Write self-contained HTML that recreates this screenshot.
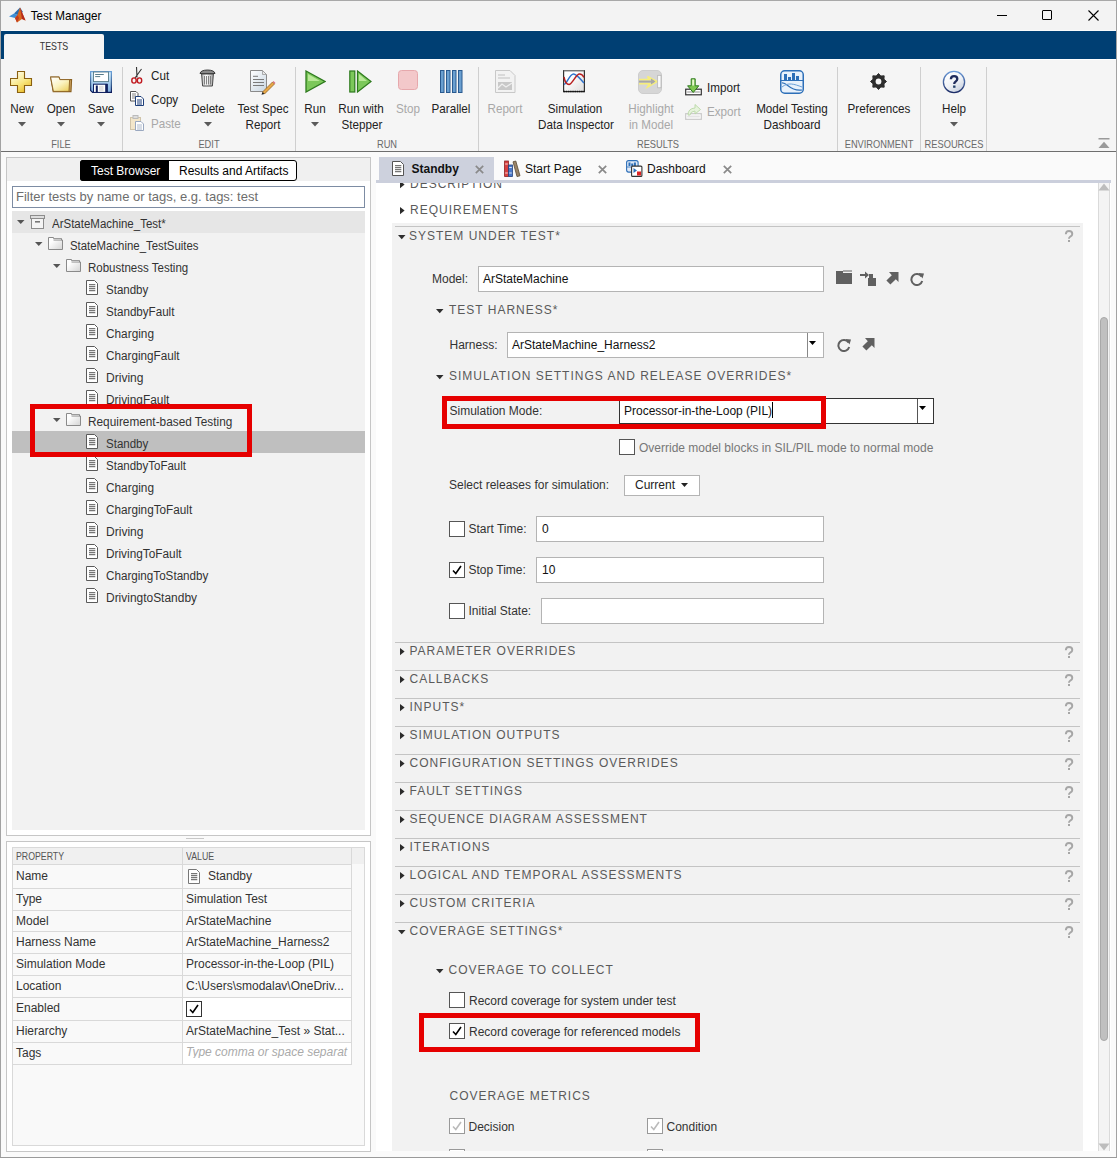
<!DOCTYPE html><html><head><meta charset="utf-8"><style>
html,body{margin:0;padding:0}
body{width:1117px;height:1158px;position:relative;overflow:hidden;background:#fafafa;font-family:"Liberation Sans",sans-serif}
body div{position:absolute;box-sizing:border-box}
.t{white-space:nowrap;line-height:1}
</style></head><body>
<div style="left:0px;top:0px;width:1117px;height:31px;background:#f3f3f3"></div>
<svg style="position:absolute;left:9px;top:7px" width="17" height="16" viewBox="0 0 17 16"><path d="M0 9.5 L5 6.5 L8.5 8 L6 11 Z" fill="#3d8fd6"/><path d="M5 6.5 L11 0.5 L14 5 L8.5 8 Z" fill="#2a6db0"/><path d="M8.5 8 L11 0.5 L16.5 13.5 L13 12 L8 15.5 L6 11 Z" fill="#d9661e"/><path d="M11 0.5 L16.5 13.5 L13 12 Z" fill="#b52a1c"/><path d="M6 11 L8.5 8 L10 11 L8 15.5 Z" fill="#c13a1e"/></svg>
<div class="t" style="left:-84px;width:300px;text-align:center;top:9.5px;font-size:12.4px;color:#000;transform:scaleX(0.94);">Test Manager</div>
<div style="left:997px;top:15px;width:10px;height:1px;background:#000"></div>
<div style="left:1042px;top:10px;width:10px;height:10px;border:1px solid #000;border-radius:1px"></div>
<svg style="position:absolute;left:1088px;top:10px" width="11" height="11" viewBox="0 0 11 11"><path d="M0.5 0.5 L10.5 10.5 M10.5 0.5 L0.5 10.5" stroke="#000" stroke-width="1.1"/></svg>
<div style="left:0px;top:31px;width:1117px;height:28px;background:#003f73"></div>
<div style="left:4px;top:34px;width:100px;height:26px;background:#f5f5f5;border-radius:2px 2px 0 0"></div>
<div class="t" style="left:-96px;width:300px;text-align:center;top:41px;font-size:10.8px;color:#333;transform:scaleX(0.82);">TESTS</div>
<div style="left:0px;top:59px;width:1117px;height:92px;background:#f5f5f5"></div>
<div style="left:104px;top:59px;width:1013px;height:1px;background:#ffffff"></div>
<div style="left:0px;top:30px;width:1117px;height:1px;background:#fbfbfb"></div>
<div style="left:0px;top:151px;width:1117px;height:1px;background:#6e6e6e"></div>
<div style="left:122px;top:67px;width:1px;height:84px;background:#cfcfcf"></div>
<div style="left:295px;top:67px;width:1px;height:84px;background:#cfcfcf"></div>
<div style="left:478px;top:67px;width:1px;height:84px;background:#cfcfcf"></div>
<div style="left:837px;top:67px;width:1px;height:84px;background:#cfcfcf"></div>
<div style="left:920px;top:67px;width:1px;height:84px;background:#cfcfcf"></div>
<div style="left:986px;top:67px;width:1px;height:84px;background:#cfcfcf"></div>
<div class="t" style="left:-89px;width:300px;text-align:center;top:139px;font-size:10.8px;color:#6a6a6a;transform:scaleX(0.86);">FILE</div>
<div class="t" style="left:58.5px;width:300px;text-align:center;top:139px;font-size:10.8px;color:#6a6a6a;transform:scaleX(0.86);">EDIT</div>
<div class="t" style="left:236.5px;width:300px;text-align:center;top:139px;font-size:10.8px;color:#6a6a6a;transform:scaleX(0.86);">RUN</div>
<div class="t" style="left:508px;width:300px;text-align:center;top:139px;font-size:10.8px;color:#6a6a6a;transform:scaleX(0.86);">RESULTS</div>
<div class="t" style="left:729px;width:300px;text-align:center;top:139px;font-size:10.8px;color:#6a6a6a;transform:scaleX(0.86);">ENVIRONMENT</div>
<div class="t" style="left:803.5px;width:300px;text-align:center;top:139px;font-size:10.8px;color:#6a6a6a;transform:scaleX(0.86);">RESOURCES</div>
<svg style="position:absolute;left:10px;top:71px" width="23" height="23" viewBox="0 0 23 23"><defs><linearGradient id="pl" x1="0.2" y1="0" x2="0.8" y2="1"><stop offset="0" stop-color="#fffef0"/><stop offset=".55" stop-color="#f8e680"/><stop offset="1" stop-color="#e8b820"/></linearGradient></defs><path d="M7.5 0.5 H14.5 V7.5 H21.5 V14.5 H14.5 V21.5 H7.5 V14.5 H0.5 V7.5 H7.5 Z" fill="url(#pl)" stroke="#8a6010" stroke-width="1.1"/></svg>
<div class="t" style="left:-128.5px;width:300px;text-align:center;top:102.5px;font-size:12.4px;color:#222;transform:scaleX(0.94);">New</div>
<svg style="position:absolute;left:17.5px;top:122px" width="8" height="5" viewBox="0 0 8 5"><path d="M0 0 L8 0 L4 4.5 Z" fill="#5a5a5a"/></svg>
<svg style="position:absolute;left:50px;top:76px" width="23" height="17" viewBox="0 0 23 17"><defs><linearGradient id="of" x1="0.1" y1="0" x2="0.9" y2="1"><stop offset="0" stop-color="#ffffff"/><stop offset=".5" stop-color="#fbf3c0"/><stop offset="1" stop-color="#ecd060"/></linearGradient></defs><path d="M0.6 1.1 H9 L10 3.6 H21.6 L21 15.6 H3.2 Z" fill="#c8a060" stroke="#8a6020" stroke-width="1.1"/><path d="M0.6 1.1 H9 L9.8 3.6 H19.6 L19 15.4 H3.4 Z" fill="url(#of)" stroke="#8a6020" stroke-width=".9"/></svg>
<div class="t" style="left:-89px;width:300px;text-align:center;top:102.5px;font-size:12.4px;color:#222;transform:scaleX(0.94);">Open</div>
<svg style="position:absolute;left:57px;top:122px" width="8" height="5" viewBox="0 0 8 5"><path d="M0 0 L8 0 L4 4.5 Z" fill="#5a5a5a"/></svg>
<svg style="position:absolute;left:90px;top:71px" width="23" height="23" viewBox="0 0 23 23"><defs><linearGradient id="fl" x1="0" y1="0" x2="0" y2="1"><stop offset="0" stop-color="#d8f0fc"/><stop offset="1" stop-color="#7eaee0"/></linearGradient><linearGradient id="fs" x1="0" y1="0" x2="0" y2="1"><stop offset="0" stop-color="#6aa0d8"/><stop offset=".6" stop-color="#3a6090"/><stop offset="1" stop-color="#0c1858"/></linearGradient></defs><path d="M0.6 0.6 H21.4 V21.4 H2.6 L0.6 19.4 Z" fill="url(#fl)" stroke="url(#fs)" stroke-width="1.2"/><rect x="3.5" y="1" width="15" height="9.6" fill="#fff" stroke="#557a88" stroke-width=".9"/><path d="M5.2 3.5 H13.8 M5.2 5.6 H10.2" stroke="#587c8a" stroke-width="1"/><rect x="3.5" y="13.2" width="13.5" height="8.2" fill="#fff" stroke="#0e1e5e" stroke-width="1"/><rect x="5.8" y="14.5" width="2" height="7" fill="#0e1e5e"/><rect x="9" y="14.8" width="4.5" height="5.5" fill="#e2e2e2"/><rect x="15.2" y="13" width="2.6" height="8.6" fill="#10205e"/></svg>
<div class="t" style="left:-49.5px;width:300px;text-align:center;top:102.5px;font-size:12.4px;color:#222;transform:scaleX(0.94);">Save</div>
<svg style="position:absolute;left:96.5px;top:122px" width="8" height="5" viewBox="0 0 8 5"><path d="M0 0 L8 0 L4 4.5 Z" fill="#5a5a5a"/></svg>
<svg style="position:absolute;left:130px;top:66px" width="13" height="18" viewBox="0 0 13 18"><path d="M6.5 1 L7 11.5 M11.5 3 L5 12" stroke="#333" stroke-width="1.1"/><ellipse cx="4" cy="14.5" rx="2.2" ry="2.6" fill="none" stroke="#c0181e" stroke-width="1.4"/><ellipse cx="9.5" cy="14.5" rx="2.2" ry="2.6" fill="none" stroke="#c0181e" stroke-width="1.4"/></svg>
<div class="t" style="left:151px;top:69.5px;font-size:12.4px;color:#222;transform:scaleX(0.94);transform-origin:0 0">Cut</div>
<svg style="position:absolute;left:130px;top:91px" width="14" height="15" viewBox="0 0 14 15"><path d="M0.5 0.5 H6 L8 2.5 V10 H0.5 Z" fill="#fff" stroke="#555"/><path d="M2 3 H6 M2 5 H6 M2 7 H6" stroke="#666" stroke-width=".8"/><path d="M5.5 5.5 H11 L13.5 8 V14.5 H5.5 Z" fill="#fff" stroke="#1e3f7a"/><path d="M7 9 H12 M7 11 H12 M7 13 H12" stroke="#1e3f7a" stroke-width="1"/></svg>
<div class="t" style="left:151px;top:93.5px;font-size:12.4px;color:#222;transform:scaleX(0.94);transform-origin:0 0">Copy</div>
<svg style="position:absolute;left:130px;top:115px" width="14" height="16" viewBox="0 0 14 16"><rect x="0.5" y="2.5" width="10" height="12" fill="#f3e3c0" stroke="#c8b898" opacity=".8"/><rect x="3" y="0.5" width="5" height="3" fill="#ddd" stroke="#bbb"/><path d="M5.5 6.5 H11 L13.5 9 V15.5 H5.5 Z" fill="#fff" stroke="#9aa8c0"/><path d="M7 10 H12 M7 12 H12 M7 14 H12" stroke="#9aa8c0" stroke-width=".8"/></svg>
<div class="t" style="left:151px;top:117.5px;font-size:12.4px;color:#a8a8a8;transform:scaleX(0.94);transform-origin:0 0">Paste</div>
<svg style="position:absolute;left:199px;top:69px" width="18" height="19" viewBox="0 0 18 19"><defs><linearGradient id="tb" x1="0" y1="0" x2="1" y2="0"><stop offset="0" stop-color="#b0b0b0"/><stop offset=".4" stop-color="#ffffff"/><stop offset="1" stop-color="#a0a0a0"/></linearGradient></defs><path d="M1 4.5 Q1.5 1.2 8.5 1 Q15.5 1.2 16 4.5 Z" fill="#8a8a8a" stroke="#3a3a3a" stroke-width="1"/><path d="M2.6 5 L3.6 17 H13.4 L14.4 5 Z" fill="url(#tb)" stroke="#4a4a4a" stroke-width="1"/><path d="M5.5 7 V15.5 M7.5 7 V15.5 M9.5 7 V15.5 M11.5 7 V15.5" stroke="#777" stroke-width=".9"/></svg>
<div class="t" style="left:58px;width:300px;text-align:center;top:102.5px;font-size:12.4px;color:#222;transform:scaleX(0.94);">Delete</div>
<svg style="position:absolute;left:204px;top:122px" width="8" height="5" viewBox="0 0 8 5"><path d="M0 0 L8 0 L4 4.5 Z" fill="#5a5a5a"/></svg>
<svg style="position:absolute;left:249px;top:70px" width="27" height="25" viewBox="0 0 27 25"><defs><linearGradient id="pg" x1="0" y1="0" x2="1" y2="1"><stop offset="0" stop-color="#ffffff"/><stop offset="1" stop-color="#c8d6e2"/></linearGradient></defs><path d="M1.5 0.5 H13.5 L17.5 4.5 V21.5 H1.5 Z" fill="url(#pg)" stroke="#8a8a8a"/><path d="M13.5 0.5 V4.5 H17.5 Z" fill="#e8e8e8" stroke="#9a9a9a" stroke-width=".8"/><path d="M4 6.3 H9 M4 9.5 H15 M4 12.5 H15 M4 15.5 H15" stroke="#7a7a7a" stroke-width="1"/><path d="M13.5 22 L23.5 12 L25.5 14 L15.5 24 Z" fill="#e8a848" stroke="#8a5a18" stroke-width=".7"/><path d="M23.5 12 L24.5 11 L26.5 13 L25.5 14 Z" fill="#d87080"/><path d="M13.5 22 L15.5 24 L12.5 24.8 Z" fill="#222"/></svg>
<div class="t" style="left:112.5px;width:300px;text-align:center;top:102.5px;font-size:12.4px;color:#222;transform:scaleX(0.94);">Test Spec</div>
<div class="t" style="left:112.5px;width:300px;text-align:center;top:118.5px;font-size:12.4px;color:#222;transform:scaleX(0.94);">Report</div>
<svg style="position:absolute;left:305px;top:70px" width="21" height="23" viewBox="0 0 21 23"><path d="M1 1 L20 11.5 L1 22 Z" fill="#7cc85a" stroke="#2e7a1e" stroke-width="1.3"/><path d="M3 4 L15 11 L3 11 Z" fill="#c8f0a8" opacity=".8"/></svg>
<div class="t" style="left:164.5px;width:300px;text-align:center;top:102.5px;font-size:12.4px;color:#222;transform:scaleX(0.94);">Run</div>
<svg style="position:absolute;left:310.5px;top:122px" width="8" height="5" viewBox="0 0 8 5"><path d="M0 0 L8 0 L4 4.5 Z" fill="#5a5a5a"/></svg>
<svg style="position:absolute;left:349px;top:70px" width="23" height="23" viewBox="0 0 23 23"><rect x="0.8" y="1" width="5" height="21" fill="#7cc85a" stroke="#2e7a1e" stroke-width="1.2"/><path d="M8.5 1 L22 11.5 L8.5 22 Z" fill="#7cc85a" stroke="#2e7a1e" stroke-width="1.2"/><path d="M10 4 L18 11 L10 11 Z" fill="#c8f0a8" opacity=".8"/></svg>
<div class="t" style="left:210.5px;width:300px;text-align:center;top:102.5px;font-size:12.4px;color:#222;transform:scaleX(0.94);">Run with</div>
<div class="t" style="left:211.5px;width:300px;text-align:center;top:118.5px;font-size:12.4px;color:#222;transform:scaleX(0.94);">Stepper</div>
<svg style="position:absolute;left:398px;top:70px" width="20" height="20" viewBox="0 0 20 20"><rect x="0.5" y="0.5" width="19" height="19" rx="3" fill="#f3c8ca" stroke="#e6a8ac"/></svg>
<div class="t" style="left:258px;width:300px;text-align:center;top:102.5px;font-size:12.4px;color:#a8a8a8;transform:scaleX(0.94);">Stop</div>
<svg style="position:absolute;left:440px;top:70px" width="23" height="23" viewBox="0 0 23 23"><g fill="#6a9fd0" stroke="#2a5a90" stroke-width="1"><rect x="0.5" y="0.5" width="3.5" height="22"/><rect x="6.5" y="0.5" width="3.5" height="22"/><rect x="12.5" y="0.5" width="3.5" height="22"/><rect x="18.5" y="0.5" width="3.5" height="22"/></g></svg>
<div class="t" style="left:301px;width:300px;text-align:center;top:102.5px;font-size:12.4px;color:#222;transform:scaleX(0.94);">Parallel</div>
<svg style="position:absolute;left:495px;top:70px" width="21" height="23" viewBox="0 0 21 23"><path d="M0.5 0.5 H15 L20 5.5 V22.5 H0.5 Z" fill="#f2f2f2" stroke="#c8c8c8"/><path d="M3 5 H10 M3 8 H15" stroke="#c0c0c0"/><path d="M3 12 H17 V20 H3 Z" fill="#c8c8c8"/><path d="M3 18 L7 14 L11 17 L17 13" stroke="#eee" fill="none" stroke-width="1.3"/></svg>
<div class="t" style="left:355px;width:300px;text-align:center;top:102.5px;font-size:12.4px;color:#a8a8a8;transform:scaleX(0.94);">Report</div>
<svg style="position:absolute;left:563px;top:70px" width="22" height="23" viewBox="0 0 22 23"><defs><linearGradient id="sg" x1="0.3" y1="0.3" x2="1" y2="1"><stop offset="0" stop-color="#fff"/><stop offset="1" stop-color="#dcdcdc"/></linearGradient></defs><rect x="0.6" y="0.6" width="20.8" height="21" fill="url(#sg)" stroke="#333" stroke-width="1.2"/><path d="M0.6 0.6 H21.4" stroke="#777" stroke-width="1.2"/><path d="M1.2 14.5 C4 13, 7 4, 10.5 4 C14 4, 18 10, 21 13" fill="none" stroke="#2f72cc" stroke-width="1.5"/><path d="M1 7 C2 12.5, 4 14.5, 6 14.5 C9 14.5, 13 4, 16.5 4 C19 4, 20.3 6, 21 7.5" fill="none" stroke="#b82020" stroke-width="1.5"/><path d="M0.5 21.5 H21.5" stroke="#111" stroke-width="1.5" stroke-dasharray="1.5 .7"/></svg>
<div class="t" style="left:425px;width:300px;text-align:center;top:102.5px;font-size:12.4px;color:#222;transform:scaleX(0.94);">Simulation</div>
<div class="t" style="left:425.5px;width:300px;text-align:center;top:118.5px;font-size:12.4px;color:#222;transform:scaleX(0.94);">Data Inspector</div>
<svg style="position:absolute;left:638px;top:70px" width="24" height="24" viewBox="0 0 24 24"><rect x="0.5" y="0.5" width="23" height="23" rx="4.5" fill="#d6d6d6" stroke="#cdcdcd"/><path d="M1 9.6 H11.5 L9.5 6.5 L19 11.6 L9.5 17 L11.5 13.6 H1" fill="none" stroke="#f6ee7a" stroke-width="1.6"/><path d="M1 11.6 H16" stroke="#a8a8a8" stroke-width="2"/><path d="M13 8.5 L17.5 11.6 L13 14.5 Z" fill="#a8a8a8"/><rect x="19.7" y="5.3" width="3.3" height="12.5" fill="#fafafa" stroke="#b0b0b0" stroke-width=".7"/></svg>
<div class="t" style="left:500.5px;width:300px;text-align:center;top:102.5px;font-size:12.4px;color:#a8a8a8;transform:scaleX(0.94);">Highlight</div>
<div class="t" style="left:500.5px;width:300px;text-align:center;top:118.5px;font-size:12.4px;color:#a8a8a8;transform:scaleX(0.94);">in Model</div>
<svg style="position:absolute;left:685px;top:78px" width="17" height="18" viewBox="0 0 17 18"><rect x="0.7" y="11.2" width="15.6" height="5.6" fill="#fff" stroke="#333" stroke-width="1.2"/><rect x="2.2" y="13" width="12.6" height="2" fill="#c8c8c8"/><path d="M6.2 0.8 H10.2 V7.8 H13.8 L8.2 14.5 L2.6 7.8 H6.2 Z" fill="#7ec850" stroke="#2f7a1e" stroke-width="1"/><rect x="7.2" y="1.5" width="2" height="6" fill="#e8f8d0"/></svg>
<div class="t" style="left:707px;top:81.5px;font-size:12.4px;color:#222;transform:scaleX(0.94);transform-origin:0 0">Import</div>
<svg style="position:absolute;left:685px;top:103px" width="17" height="17" viewBox="0 0 17 17"><rect x="0.7" y="10.7" width="15.6" height="5.6" fill="#fff" stroke="#c8c8c8" stroke-width="1.2"/><rect x="2.2" y="12.5" width="12.6" height="2" fill="#e4e4e4"/><path d="M3 12 Q3 5.5 10 5 V1.5 L15.5 6.5 L10 11 V8 Q5.5 8.3 5 12 Z" fill="#e6f3dc" stroke="#b9d8a6" stroke-width=".9"/></svg>
<div class="t" style="left:707px;top:105.5px;font-size:12.4px;color:#a8a8a8;transform:scaleX(0.94);transform-origin:0 0">Export</div>
<svg style="position:absolute;left:780px;top:70px" width="24" height="24" viewBox="0 0 24 24"><rect x="0.75" y="0.75" width="22.5" height="22.5" rx="4" fill="#e8f1fb" stroke="#2d6fb8" stroke-width="1.5"/><rect x="4" y="4" width="3" height="6" fill="#2d6fb8"/><rect x="8" y="7" width="3" height="3" fill="#2d6fb8"/><rect x="12" y="3" width="3" height="7" fill="#2d6fb8"/><rect x="16" y="6" width="3" height="4" fill="#2d6fb8"/><path d="M1 10.5 H23" stroke="#2d6fb8"/><path d="M2 13 C7 12, 10 22, 22 20" fill="none" stroke="#2d6fb8" stroke-width="1.2"/><path d="M2 17 C8 12, 14 14, 22 17" fill="none" stroke="#6aa0d8" stroke-width="1"/></svg>
<div class="t" style="left:642px;width:300px;text-align:center;top:102.5px;font-size:12.4px;color:#222;transform:scaleX(0.94);">Model Testing</div>
<div class="t" style="left:642px;width:300px;text-align:center;top:118.5px;font-size:12.4px;color:#222;transform:scaleX(0.94);">Dashboard</div>
<svg style="position:absolute;left:870px;top:73px" width="17" height="17" viewBox="0 0 17 17"><path d="M8.50 0.50 L10.76 3.05 L14.16 2.84 L13.95 6.24 L16.50 8.50 L13.95 10.76 L14.16 14.16 L10.76 13.95 L8.50 16.50 L6.24 13.95 L2.84 14.16 L3.05 10.76 L0.50 8.50 L3.05 6.24 L2.84 2.84 L6.24 3.05 Z" fill="#2e2e2e" stroke="#2e2e2e" stroke-width="1" stroke-linejoin="round"/><circle cx="8.5" cy="8.5" r="2.9" fill="#f5f5f5"/></svg>
<div class="t" style="left:729px;width:300px;text-align:center;top:102.5px;font-size:12.4px;color:#222;transform:scaleX(0.94);">Preferences</div>
<svg style="position:absolute;left:942px;top:70px" width="24" height="24" viewBox="0 0 24 24"><defs><linearGradient id="hg" x1="0.2" y1="0.1" x2="0.8" y2="1"><stop offset="0" stop-color="#ffffff"/><stop offset="0.5" stop-color="#eef1f6"/><stop offset="1" stop-color="#c3ccdc"/></linearGradient><linearGradient id="hb" x1="0" y1="0" x2="0" y2="1"><stop offset="0" stop-color="#6b9ad8"/><stop offset="1" stop-color="#1c2c66"/></linearGradient></defs><circle cx="12" cy="12" r="10.6" fill="url(#hg)" stroke="url(#hb)" stroke-width="1.3"/><path d="M8.9 9.3 C8.9 7.2, 10.3 6.2, 12.1 6.2 C14 6.2, 15.3 7.3, 15.3 9 C15.3 10.6, 14.1 11.2, 13.2 11.9 C12.5 12.4, 12.3 12.8, 12.3 13.8 V14.1" fill="none" stroke="#1f2b5c" stroke-width="2.3"/><rect x="11.1" y="15.5" width="2.4" height="2.3" fill="#23406a"/></svg>
<div class="t" style="left:803.5px;width:300px;text-align:center;top:102.5px;font-size:12.4px;color:#222;transform:scaleX(0.94);">Help</div>
<svg style="position:absolute;left:949.5px;top:122px" width="8" height="5" viewBox="0 0 8 5"><path d="M0 0 L8 0 L4 4.5 Z" fill="#5a5a5a"/></svg>
<svg style="position:absolute;left:1098px;top:138px" width="12" height="11" viewBox="0 0 12 11"><rect x="0.5" y="0" width="11" height="1.5" fill="#9a9a9a"/><path d="M0.5 10 L6 3.8 L11.5 10 Z" fill="#9a9a9a"/></svg>
<div style="left:6px;top:157px;width:365px;height:679px;background:#fff;border:1px solid #c6c6c6"></div>
<div style="left:7px;top:158px;width:363px;height:23px;background:#f0f0f0"></div>
<div style="left:80px;top:160px;width:217px;height:21px;border:1px solid #000;border-radius:3px;background:#fff"></div>
<div style="left:80px;top:160px;width:89px;height:21px;background:#000;border-radius:3px 0 0 3px"></div>
<div class="t" style="left:91px;top:164.5px;font-size:12px;color:#fff;">Test Browser</div>
<div class="t" style="left:179px;top:164.5px;font-size:12px;color:#000;">Results and Artifacts</div>
<div style="left:12px;top:186px;width:353px;height:22px;border:1px solid #7d8ca3;background:#fff"></div>
<div class="t" style="left:16px;top:190.0px;font-size:13px;color:#6d6d6d;">Filter tests by name or tags, e.g. tags: test</div>
<div style="left:12px;top:211px;width:353px;height:619px;background:#f2f2f2"></div>
<div style="left:12px;top:211px;width:353px;height:22px;background:#e6e6e6"></div>
<div style="left:12px;top:431px;width:353px;height:22px;background:#bfbfbf"></div>
<svg style="position:absolute;left:17px;top:220px" width="8" height="5" viewBox="0 0 8 5"><path d="M0 0 L7.5 0 L3.75 4 Z" fill="#555"/></svg>
<svg style="position:absolute;left:30px;top:215px" width="16" height="14" viewBox="0 0 16 14"><rect x="0.5" y="0.5" width="14" height="3" fill="#ddd" stroke="#8c8c8c"/><rect x="1.5" y="3.5" width="12" height="10" fill="#f4f4f4" stroke="#8c8c8c"/><rect x="5" y="6" width="5" height="1.6" fill="#777"/></svg>
<div class="t" style="left:52px;top:218.0px;font-size:12px;color:#333;transform:scaleX(0.9576);transform-origin:0 0">ArStateMachine_Test*</div>
<svg style="position:absolute;left:35px;top:242px" width="8" height="5" viewBox="0 0 8 5"><path d="M0 0 L7.5 0 L3.75 4 Z" fill="#555"/></svg>
<svg style="position:absolute;left:48px;top:237px" width="16" height="14" viewBox="0 0 16 14"><defs><linearGradient id="fg" x1="0" y1="0" x2="1" y2="1"><stop offset=".3" stop-color="#fdfdfd"/><stop offset="1" stop-color="#d4d4d4"/></linearGradient></defs><path d="M0.5 0.5 H5.5 V1.5 H13.5 V3 H14.5 V12.5 H0.5 Z" fill="url(#fg)" stroke="#8a8a8a"/><path d="M5.5 3 H14" stroke="#8a8a8a" stroke-width="1"/><path d="M6 2.2 H13" stroke="#cfcfcf" stroke-width=".8"/></svg>
<div class="t" style="left:70px;top:240.0px;font-size:12px;color:#333;transform:scaleX(0.9490);transform-origin:0 0">StateMachine_TestSuites</div>
<svg style="position:absolute;left:53px;top:264px" width="8" height="5" viewBox="0 0 8 5"><path d="M0 0 L7.5 0 L3.75 4 Z" fill="#555"/></svg>
<svg style="position:absolute;left:66px;top:259px" width="16" height="14" viewBox="0 0 16 14"><defs><linearGradient id="fg" x1="0" y1="0" x2="1" y2="1"><stop offset=".3" stop-color="#fdfdfd"/><stop offset="1" stop-color="#d4d4d4"/></linearGradient></defs><path d="M0.5 0.5 H5.5 V1.5 H13.5 V3 H14.5 V12.5 H0.5 Z" fill="url(#fg)" stroke="#8a8a8a"/><path d="M5.5 3 H14" stroke="#8a8a8a" stroke-width="1"/><path d="M6 2.2 H13" stroke="#cfcfcf" stroke-width=".8"/></svg>
<div class="t" style="left:88px;top:262.0px;font-size:12px;color:#333;transform:scaleX(0.9588);transform-origin:0 0">Robustness Testing</div>
<svg style="position:absolute;left:86px;top:280px" width="13" height="16" viewBox="0 0 13 16"><path d="M0.5 0.5 H8.5 L11.5 3.5 V14.5 H0.5 Z" fill="#fff" stroke="#5a5a5a"/><path d="M3 4.7 H9.3 M3 6.7 H9.3 M3 8.7 H9.3 M3 10.7 H9.3" stroke="#444" stroke-width=".9"/></svg>
<div class="t" style="left:106px;top:284.0px;font-size:12px;color:#333;transform:scaleX(0.9606);transform-origin:0 0">Standby</div>
<svg style="position:absolute;left:86px;top:302px" width="13" height="16" viewBox="0 0 13 16"><path d="M0.5 0.5 H8.5 L11.5 3.5 V14.5 H0.5 Z" fill="#fff" stroke="#5a5a5a"/><path d="M3 4.7 H9.3 M3 6.7 H9.3 M3 8.7 H9.3 M3 10.7 H9.3" stroke="#444" stroke-width=".9"/></svg>
<div class="t" style="left:106px;top:306.0px;font-size:12px;color:#333;transform:scaleX(0.9673);transform-origin:0 0">StandbyFault</div>
<svg style="position:absolute;left:86px;top:324px" width="13" height="16" viewBox="0 0 13 16"><path d="M0.5 0.5 H8.5 L11.5 3.5 V14.5 H0.5 Z" fill="#fff" stroke="#5a5a5a"/><path d="M3 4.7 H9.3 M3 6.7 H9.3 M3 8.7 H9.3 M3 10.7 H9.3" stroke="#444" stroke-width=".9"/></svg>
<div class="t" style="left:106px;top:328.0px;font-size:12px;color:#333;transform:scaleX(0.9857);transform-origin:0 0">Charging</div>
<svg style="position:absolute;left:86px;top:346px" width="13" height="16" viewBox="0 0 13 16"><path d="M0.5 0.5 H8.5 L11.5 3.5 V14.5 H0.5 Z" fill="#fff" stroke="#5a5a5a"/><path d="M3 4.7 H9.3 M3 6.7 H9.3 M3 8.7 H9.3 M3 10.7 H9.3" stroke="#444" stroke-width=".9"/></svg>
<div class="t" style="left:106px;top:350.0px;font-size:12px;color:#333;transform:scaleX(0.9765);transform-origin:0 0">ChargingFault</div>
<svg style="position:absolute;left:86px;top:368px" width="13" height="16" viewBox="0 0 13 16"><path d="M0.5 0.5 H8.5 L11.5 3.5 V14.5 H0.5 Z" fill="#fff" stroke="#5a5a5a"/><path d="M3 4.7 H9.3 M3 6.7 H9.3 M3 8.7 H9.3 M3 10.7 H9.3" stroke="#444" stroke-width=".9"/></svg>
<div class="t" style="left:106px;top:372.0px;font-size:12px;color:#333;transform:scaleX(1.0043);transform-origin:0 0">Driving</div>
<svg style="position:absolute;left:86px;top:390px" width="13" height="16" viewBox="0 0 13 16"><path d="M0.5 0.5 H8.5 L11.5 3.5 V14.5 H0.5 Z" fill="#fff" stroke="#5a5a5a"/><path d="M3 4.7 H9.3 M3 6.7 H9.3 M3 8.7 H9.3 M3 10.7 H9.3" stroke="#444" stroke-width=".9"/></svg>
<div class="t" style="left:106px;top:394.0px;font-size:12px;color:#333;transform:scaleX(0.9904);transform-origin:0 0">DrivingFault</div>
<svg style="position:absolute;left:53px;top:418px" width="8" height="5" viewBox="0 0 8 5"><path d="M0 0 L7.5 0 L3.75 4 Z" fill="#555"/></svg>
<svg style="position:absolute;left:66px;top:413px" width="16" height="14" viewBox="0 0 16 14"><defs><linearGradient id="fg" x1="0" y1="0" x2="1" y2="1"><stop offset=".3" stop-color="#fdfdfd"/><stop offset="1" stop-color="#d4d4d4"/></linearGradient></defs><path d="M0.5 0.5 H5.5 V1.5 H13.5 V3 H14.5 V12.5 H0.5 Z" fill="url(#fg)" stroke="#8a8a8a"/><path d="M5.5 3 H14" stroke="#8a8a8a" stroke-width="1"/><path d="M6 2.2 H13" stroke="#cfcfcf" stroke-width=".8"/></svg>
<div class="t" style="left:88px;top:416.0px;font-size:12px;color:#333;transform:scaleX(0.9848);transform-origin:0 0">Requirement-based Testing</div>
<svg style="position:absolute;left:86px;top:434px" width="13" height="16" viewBox="0 0 13 16"><path d="M0.5 0.5 H8.5 L11.5 3.5 V14.5 H0.5 Z" fill="#fff" stroke="#5a5a5a"/><path d="M3 4.7 H9.3 M3 6.7 H9.3 M3 8.7 H9.3 M3 10.7 H9.3" stroke="#444" stroke-width=".9"/></svg>
<div class="t" style="left:106px;top:438.0px;font-size:12px;color:#333;transform:scaleX(0.9606);transform-origin:0 0">Standby</div>
<svg style="position:absolute;left:86px;top:456px" width="13" height="16" viewBox="0 0 13 16"><path d="M0.5 0.5 H8.5 L11.5 3.5 V14.5 H0.5 Z" fill="#fff" stroke="#5a5a5a"/><path d="M3 4.7 H9.3 M3 6.7 H9.3 M3 8.7 H9.3 M3 10.7 H9.3" stroke="#444" stroke-width=".9"/></svg>
<div class="t" style="left:106px;top:460.0px;font-size:12px;color:#333;transform:scaleX(0.9594);transform-origin:0 0">StandbyToFault</div>
<svg style="position:absolute;left:86px;top:478px" width="13" height="16" viewBox="0 0 13 16"><path d="M0.5 0.5 H8.5 L11.5 3.5 V14.5 H0.5 Z" fill="#fff" stroke="#5a5a5a"/><path d="M3 4.7 H9.3 M3 6.7 H9.3 M3 8.7 H9.3 M3 10.7 H9.3" stroke="#444" stroke-width=".9"/></svg>
<div class="t" style="left:106px;top:482.0px;font-size:12px;color:#333;transform:scaleX(0.9857);transform-origin:0 0">Charging</div>
<svg style="position:absolute;left:86px;top:500px" width="13" height="16" viewBox="0 0 13 16"><path d="M0.5 0.5 H8.5 L11.5 3.5 V14.5 H0.5 Z" fill="#fff" stroke="#5a5a5a"/><path d="M3 4.7 H9.3 M3 6.7 H9.3 M3 8.7 H9.3 M3 10.7 H9.3" stroke="#444" stroke-width=".9"/></svg>
<div class="t" style="left:106px;top:504.0px;font-size:12px;color:#333;transform:scaleX(0.9790);transform-origin:0 0">ChargingToFault</div>
<svg style="position:absolute;left:86px;top:522px" width="13" height="16" viewBox="0 0 13 16"><path d="M0.5 0.5 H8.5 L11.5 3.5 V14.5 H0.5 Z" fill="#fff" stroke="#5a5a5a"/><path d="M3 4.7 H9.3 M3 6.7 H9.3 M3 8.7 H9.3 M3 10.7 H9.3" stroke="#444" stroke-width=".9"/></svg>
<div class="t" style="left:106px;top:526.0px;font-size:12px;color:#333;transform:scaleX(1.0043);transform-origin:0 0">Driving</div>
<svg style="position:absolute;left:86px;top:544px" width="13" height="16" viewBox="0 0 13 16"><path d="M0.5 0.5 H8.5 L11.5 3.5 V14.5 H0.5 Z" fill="#fff" stroke="#5a5a5a"/><path d="M3 4.7 H9.3 M3 6.7 H9.3 M3 8.7 H9.3 M3 10.7 H9.3" stroke="#444" stroke-width=".9"/></svg>
<div class="t" style="left:106px;top:548.0px;font-size:12px;color:#333;transform:scaleX(0.9858);transform-origin:0 0">DrivingToFault</div>
<svg style="position:absolute;left:86px;top:566px" width="13" height="16" viewBox="0 0 13 16"><path d="M0.5 0.5 H8.5 L11.5 3.5 V14.5 H0.5 Z" fill="#fff" stroke="#5a5a5a"/><path d="M3 4.7 H9.3 M3 6.7 H9.3 M3 8.7 H9.3 M3 10.7 H9.3" stroke="#444" stroke-width=".9"/></svg>
<div class="t" style="left:106px;top:570.0px;font-size:12px;color:#333;transform:scaleX(0.9715);transform-origin:0 0">ChargingToStandby</div>
<svg style="position:absolute;left:86px;top:588px" width="13" height="16" viewBox="0 0 13 16"><path d="M0.5 0.5 H8.5 L11.5 3.5 V14.5 H0.5 Z" fill="#fff" stroke="#5a5a5a"/><path d="M3 4.7 H9.3 M3 6.7 H9.3 M3 8.7 H9.3 M3 10.7 H9.3" stroke="#444" stroke-width=".9"/></svg>
<div class="t" style="left:106px;top:592.0px;font-size:12px;color:#333;transform:scaleX(0.9958);transform-origin:0 0">DrivingtoStandby</div>
<div style="left:30px;top:404px;width:222px;height:53px;border:5px solid #e60000"></div>
<div style="left:186px;top:838px;width:18px;height:1px;background:#c8c8c8"></div>
<div style="left:6px;top:841px;width:365px;height:311px;background:#fff;border:1px solid #c6c6c6"></div>
<div style="left:12px;top:847px;width:353px;height:299px;background:#f9f9f9;border:1px solid #d9d9d9"></div>
<div style="left:13px;top:848px;width:351px;height:16px;background:#f0f0f0"></div>
<div style="left:13px;top:864px;width:339px;height:1px;background:#d9d9d9"></div>
<div class="t" style="left:16px;top:852px;font-size:10.2px;color:#555;transform:scaleX(0.86);transform-origin:0 0">PROPERTY</div>
<div class="t" style="left:186px;top:852px;font-size:10.2px;color:#555;transform:scaleX(0.86);transform-origin:0 0">VALUE</div>
<div style="left:182px;top:848px;width:1px;height:217px;background:#d9d9d9"></div>
<div style="left:351px;top:848px;width:1px;height:217px;background:#d9d9d9"></div>
<div style="left:13px;top:888px;width:339px;height:1px;background:#d9d9d9"></div>
<div class="t" style="left:16px;top:870.0px;font-size:12px;color:#333;">Name</div>
<div style="left:13px;top:910px;width:339px;height:1px;background:#d9d9d9"></div>
<div class="t" style="left:16px;top:893.0px;font-size:12px;color:#333;">Type</div>
<div class="t" style="left:186px;top:893.0px;font-size:12px;color:#333;">Simulation Test</div>
<div style="left:13px;top:931px;width:339px;height:1px;background:#d9d9d9"></div>
<div class="t" style="left:16px;top:914.5px;font-size:12px;color:#333;">Model</div>
<div class="t" style="left:186px;top:914.5px;font-size:12px;color:#333;">ArStateMachine</div>
<div style="left:13px;top:953px;width:339px;height:1px;background:#d9d9d9"></div>
<div class="t" style="left:16px;top:936.0px;font-size:12px;color:#333;">Harness Name</div>
<div class="t" style="left:186px;top:936.0px;font-size:12px;color:#333;">ArStateMachine_Harness2</div>
<div style="left:13px;top:975px;width:339px;height:1px;background:#d9d9d9"></div>
<div class="t" style="left:16px;top:958.0px;font-size:12px;color:#333;">Simulation Mode</div>
<div class="t" style="left:186px;top:958.0px;font-size:12px;color:#333;">Processor-in-the-Loop (PIL)</div>
<div style="left:13px;top:997px;width:339px;height:1px;background:#d9d9d9"></div>
<div class="t" style="left:16px;top:980.0px;font-size:12px;color:#333;">Location</div>
<div class="t" style="left:186px;top:980.0px;font-size:12px;color:#333;">C:\Users\smodalav\OneDriv...</div>
<div style="left:13px;top:1020px;width:339px;height:1px;background:#d9d9d9"></div>
<div class="t" style="left:16px;top:1001.5px;font-size:12px;color:#333;">Enabled</div>
<div style="left:13px;top:1042px;width:339px;height:1px;background:#d9d9d9"></div>
<div class="t" style="left:16px;top:1025.0px;font-size:12px;color:#333;">Hierarchy</div>
<div class="t" style="left:186px;top:1025.0px;font-size:12px;color:#333;">ArStateMachine_Test &raquo; Stat...</div>
<div style="left:13px;top:1064px;width:339px;height:1px;background:#d9d9d9"></div>
<div class="t" style="left:16px;top:1047.0px;font-size:12px;color:#333;">Tags</div>
<div style="left:183px;top:998px;width:168px;height:22px;background:#fff"></div>
<div style="left:186px;top:1001px;width:16px;height:16px;border:1px solid #333;background:#fff"></div>
<svg style="position:absolute;left:188px;top:1003px" width="12" height="12" viewBox="0 0 12 12"><path d="M2 6.5 L4.8 9.5 L10 2" fill="none" stroke="#000" stroke-width="1.6"/></svg>
<svg style="position:absolute;left:188px;top:869px" width="13" height="16" viewBox="0 0 13 16"><path d="M0.5 0.5 H8.5 L11.5 3.5 V14.5 H0.5 Z" fill="#fff" stroke="#777"/><path d="M3 4.7 H9.3 M3 6.7 H9.3 M3 8.7 H9.3 M3 10.7 H9.3" stroke="#444" stroke-width=".9"/></svg>
<div class="t" style="left:208px;top:869.5px;font-size:12px;color:#333;">Standby</div>
<div style="left:183px;top:1043px;width:168px;height:21px;background:#fff"></div>
<div class="t" style="left:186px;top:1046.0px;font-size:12px;color:#aaa;font-style:italic;width:162px;overflow:hidden">Type comma or space separat</div>
<div style="left:371px;top:152px;width:745px;height:1000px;background:#fafafa"></div>
<div style="left:376px;top:183px;width:735px;height:969px;background:#fff"></div>
<div style="left:379px;top:157px;width:115px;height:24px;background:#cdd1dd"></div>
<div style="left:376px;top:180px;width:735px;height:3px;background:#cbcfdc"></div>
<svg style="position:absolute;left:392px;top:161px" width="13" height="16" viewBox="0 0 13 16"><path d="M0.5 0.5 H8.5 L11.5 3.5 V14.5 H0.5 Z" fill="#fff" stroke="#555"/><path d="M3 4.7 H9.3 M3 6.7 H9.3 M3 8.7 H9.3 M3 10.7 H9.3" stroke="#444" stroke-width=".9"/></svg>
<div class="t" style="left:411.5px;top:162.5px;font-size:12px;color:#111;font-weight:bold">Standby</div>
<svg style="position:absolute;left:475px;top:165px" width="9" height="9" viewBox="0 0 9 9"><path d="M0.8 0.8 L8.2 8.2 M8.2 0.8 L0.8 8.2" stroke="#8a8a8a" stroke-width="1.7"/></svg>
<svg style="position:absolute;left:504px;top:160px" width="17" height="18" viewBox="0 0 17 18"><rect x="0.6" y="1" width="3.8" height="15.5" fill="#d84040" stroke="#8a2020" stroke-width=".8"/><path d="M1.2 4 H3.8 M1.2 13 H3.8" stroke="#fff" stroke-width=".8"/><rect x="4.6" y="5" width="3.8" height="11.5" fill="#4a78c8" stroke="#23407a" stroke-width=".8"/><path d="M5.2 7.5 H7.8 M5.2 13 H7.8" stroke="#fff" stroke-width=".8"/><path d="M9 1.8 L11.8 1 L16 15.8 L13 16.6 Z" fill="#9a8468" stroke="#5a4a32" stroke-width=".8"/></svg>
<div class="t" style="left:525px;top:162.5px;font-size:12px;color:#111;">Start Page</div>
<svg style="position:absolute;left:598px;top:165px" width="9" height="9" viewBox="0 0 9 9"><path d="M0.8 0.8 L8.2 8.2 M8.2 0.8 L0.8 8.2" stroke="#8a8a8a" stroke-width="1.7"/></svg>
<svg style="position:absolute;left:626px;top:160px" width="17" height="18" viewBox="0 0 17 18"><rect x="0.6" y="0.6" width="11.5" height="11.5" rx="2" fill="#dfe9f6" stroke="#2d6fb8" stroke-width="1.1"/><rect x="2.5" y="2.5" width="2" height="3.5" fill="#2d6fb8"/><rect x="5.2" y="3.5" width="2" height="2.5" fill="#2d6fb8"/><rect x="7.9" y="2.5" width="2" height="3.5" fill="#2d6fb8"/><path d="M1 7 H12" stroke="#2d6fb8" stroke-width=".8"/><rect x="5.6" y="6.1" width="10.3" height="10.3" rx="1" fill="#fff" stroke="#333" stroke-width="1.1"/><path d="M7.5 8 L11 10.5 L7.5 13 Z" fill="#2d6fb8"/><rect x="11" y="11.5" width="4" height="4" fill="#d22"/></svg>
<div class="t" style="left:647px;top:162.5px;font-size:12px;color:#111;">Dashboard</div>
<svg style="position:absolute;left:723px;top:165px" width="9" height="9" viewBox="0 0 9 9"><path d="M0.8 0.8 L8.2 8.2 M8.2 0.8 L0.8 8.2" stroke="#8a8a8a" stroke-width="1.7"/></svg>
<div style="left:1098px;top:183px;width:12px;height:968px;background:#f4f4f4;border-left:1px solid #dadada;border-right:1px solid #dadada"></div>
<svg style="position:absolute;left:1098px;top:183px" width="12" height="9" viewBox="0 0 12 9"><path d="M0.5 7.5 L6 0.5 L11.5 7.5 Z" fill="#bdbdbd"/></svg>
<svg style="position:absolute;left:1098px;top:1143px" width="12" height="8" viewBox="0 0 12 8"><path d="M0.5 0.5 L6 7.5 L11.5 0.5 Z" fill="#bdbdbd"/></svg>
<div style="left:1100px;top:317px;width:8px;height:724px;background:#c0c0c0;border:1px solid #a9a9a9;border-radius:4px"></div>
<div style="left:376px;top:183px;width:700px;height:8px;overflow:hidden">
<div class="t" style="left:34px;top:-5px;font-size:12px;color:#5a5a5a;letter-spacing:1px">DESCRIPTION</div>
<svg style="position:absolute;left:24px;top:-2px" width="5" height="8"><path d="M0 0 L4.6 3.6 L0 7.2 Z" fill="#2a2a2a"/></svg>
</div>
<svg style="position:absolute;left:400px;top:207px" width="5" height="8" viewBox="0 0 5 8"><path d="M0 0 L4.6 3.6 L0 7.2 Z" fill="#2a2a2a"/></svg>
<div class="t" style="left:410px;top:203.5px;font-size:12px;color:#5a5a5a;letter-spacing:1px">REQUIREMENTS</div>
<div style="left:392px;top:223px;width:691px;height:928px;background:#f2f2f2"></div>
<div style="left:395px;top:226px;width:685px;height:1px;background:#c4c4c4"></div>
<svg style="position:absolute;left:398px;top:235px" width="8" height="5" viewBox="0 0 8 5"><path d="M0 0 L7.5 0 L3.75 4.2 Z" fill="#2e2e2e"/></svg>
<div class="t" style="left:409px;top:229.5px;font-size:12px;color:#5a5a5a;letter-spacing:1px">SYSTEM UNDER TEST*</div>
<svg style="position:absolute;left:1064px;top:230px" width="10" height="13" viewBox="0 0 10 13"><path d="M1.8 4.3 C1.9 2.1, 3.3 0.95, 5 0.95 C7 0.95, 8.3 2.2, 8.3 3.9 C8.3 5.5, 7.1 6.1, 6.1 6.7 C5.3 7.2, 5 7.7, 5 8.5 V8.8" fill="none" stroke="#a6a6a6" stroke-width="1.9"/><rect x="4" y="10" width="2" height="2" fill="#a6a6a6"/></svg>
<div class="t" style="left:432px;top:272.5px;font-size:12px;color:#333;">Model:</div>
<div style="left:478px;top:266px;width:346px;height:26px;background:#fff;border:1px solid #b4b4b4"></div>
<div class="t" style="left:483px;top:272.5px;font-size:12px;color:#111;">ArStateMachine</div>
<svg style="position:absolute;left:836px;top:270px" width="17" height="14" viewBox="0 0 17 14"><path d="M0 1 H7 V3 H16 V14 H0 Z" fill="#606060"/><rect x="7" y="0.5" width="9" height="1" fill="#606060"/></svg>
<svg style="position:absolute;left:860px;top:271px" width="17" height="15" viewBox="0 0 17 15"><path d="M0 3 H5 V0.5 L9 4 L5 7.5 V5 H0 Z" fill="#606060"/><rect x="9" y="3" width="4" height="5" fill="#606060"/><rect x="8" y="7" width="8" height="8" fill="#606060"/></svg>
<svg style="position:absolute;left:886px;top:272px" width="13" height="13" viewBox="0 0 13 13"><path d="M12.5 0 V10 L9.8 7.2 L4.4 12.6 L0.4 8.6 L5.8 3.2 L3 0 Z" fill="#606060"/></svg>
<svg style="position:absolute;left:910px;top:272px" width="15" height="14" viewBox="0 0 15 14"><path d="M11.5 4.5 A5.5 5.5 0 1 0 12.2 9" fill="none" stroke="#606060" stroke-width="2"/><path d="M8.5 1 L14 1.5 L12.5 6.5 Z" fill="#606060"/></svg>
<svg style="position:absolute;left:436px;top:309px" width="8" height="5" viewBox="0 0 8 5"><path d="M0 0 L7.5 0 L3.75 4.2 Z" fill="#2e2e2e"/></svg>
<div class="t" style="left:449px;top:304.0px;font-size:12px;color:#5a5a5a;letter-spacing:1px">TEST HARNESS*</div>
<div class="t" style="left:449.5px;top:338.5px;font-size:12px;color:#333;">Harness:</div>
<div style="left:507px;top:332px;width:317px;height:26px;background:#fff;border:1px solid #b4b4b4"></div>
<div style="left:807px;top:333px;width:1px;height:24px;background:#888"></div>
<svg style="position:absolute;left:809px;top:341px" width="8" height="5" viewBox="0 0 8 5"><path d="M0 0 L7 0 L3.5 4 Z" fill="#000"/></svg>
<div class="t" style="left:512px;top:338.5px;font-size:12px;color:#111;">ArStateMachine_Harness2</div>
<svg style="position:absolute;left:837px;top:338px" width="15" height="14" viewBox="0 0 15 14"><path d="M11.5 4.5 A5.5 5.5 0 1 0 12.2 9" fill="none" stroke="#606060" stroke-width="2"/><path d="M8.5 1 L14 1.5 L12.5 6.5 Z" fill="#606060"/></svg>
<svg style="position:absolute;left:862px;top:338px" width="13" height="13" viewBox="0 0 13 13"><path d="M12.5 0 V10 L9.8 7.2 L4.4 12.6 L0.4 8.6 L5.8 3.2 L3 0 Z" fill="#606060"/></svg>
<svg style="position:absolute;left:436px;top:375px" width="8" height="5" viewBox="0 0 8 5"><path d="M0 0 L7.5 0 L3.75 4.2 Z" fill="#2e2e2e"/></svg>
<div class="t" style="left:449px;top:370.0px;font-size:12px;color:#5a5a5a;letter-spacing:1px">SIMULATION SETTINGS AND RELEASE OVERRIDES*</div>
<div style="left:619px;top:398px;width:315px;height:26px;background:#fff;border:1px solid #333"></div>
<div style="left:917px;top:399px;width:1px;height:24px;background:#555"></div>
<svg style="position:absolute;left:919px;top:406px" width="8" height="5" viewBox="0 0 8 5"><path d="M0 0 L7 0 L3.5 4 Z" fill="#000"/></svg>
<div class="t" style="left:624px;top:404.5px;font-size:12px;color:#111;">Processor-in-the-Loop (PIL)</div>
<div style="left:772px;top:402px;width:1px;height:16px;background:#000"></div>
<div style="left:442px;top:396px;width:384px;height:33px;border:5px solid #e60000"></div>
<div class="t" style="left:449.5px;top:404.5px;font-size:12px;color:#333;">Simulation Mode:</div>
<div style="left:619px;top:439px;width:16px;height:16px;background:#fff;border:1px solid #555"></div>
<div class="t" style="left:639px;top:441.5px;font-size:12px;color:#777;">Override model blocks in SIL/PIL mode to normal mode</div>
<div class="t" style="left:449px;top:478.5px;font-size:12px;color:#333;">Select releases for simulation:</div>
<div style="left:624px;top:475px;width:76px;height:21px;background:#fff;border:1px solid #b4b4b4"></div>
<div class="t" style="left:635px;top:478.5px;font-size:12px;color:#222;">Current</div>
<svg style="position:absolute;left:681px;top:483px" width="8" height="5" viewBox="0 0 8 5"><path d="M0 0 L7 0 L3.5 4 Z" fill="#222"/></svg>
<div style="left:449px;top:521px;width:16px;height:16px;background:#fff;border:1px solid #555"></div>
<div class="t" style="left:468.5px;top:523.0px;font-size:12px;color:#333;">Start Time:</div>
<div style="left:536px;top:516px;width:288px;height:26px;background:#fff;border:1px solid #b4b4b4"></div>
<div class="t" style="left:542px;top:523.0px;font-size:12px;color:#111;">0</div>
<div style="left:449px;top:562px;width:16px;height:16px;background:#fff;border:1px solid #555"></div>
<svg style="position:absolute;left:451px;top:564px" width="12" height="12" viewBox="0 0 12 12"><path d="M2 6.5 L4.8 9.5 L10 2" fill="none" stroke="#000" stroke-width="1.6"/></svg>
<div class="t" style="left:468.5px;top:564.0px;font-size:12px;color:#333;">Stop Time:</div>
<div style="left:536px;top:557px;width:288px;height:26px;background:#fff;border:1px solid #b4b4b4"></div>
<div class="t" style="left:542px;top:564.0px;font-size:12px;color:#111;">10</div>
<div style="left:449px;top:603px;width:16px;height:16px;background:#fff;border:1px solid #555"></div>
<div class="t" style="left:468.5px;top:605.0px;font-size:12px;color:#333;">Initial State:</div>
<div style="left:541px;top:598px;width:283px;height:26px;background:#fff;border:1px solid #b4b4b4"></div>
<div style="left:395px;top:642px;width:685px;height:1px;background:#c4c4c4"></div>
<svg style="position:absolute;left:400px;top:648px" width="5" height="8" viewBox="0 0 5 8"><path d="M0 0 L4.6 3.6 L0 7.2 Z" fill="#2a2a2a"/></svg>
<div class="t" style="left:409.5px;top:644.5px;font-size:12px;color:#5a5a5a;letter-spacing:1px">PARAMETER OVERRIDES</div>
<svg style="position:absolute;left:1064px;top:646px" width="10" height="13" viewBox="0 0 10 13"><path d="M1.8 4.3 C1.9 2.1, 3.3 0.95, 5 0.95 C7 0.95, 8.3 2.2, 8.3 3.9 C8.3 5.5, 7.1 6.1, 6.1 6.7 C5.3 7.2, 5 7.7, 5 8.5 V8.8" fill="none" stroke="#a6a6a6" stroke-width="1.9"/><rect x="4" y="10" width="2" height="2" fill="#a6a6a6"/></svg>
<div style="left:395px;top:670px;width:685px;height:1px;background:#c4c4c4"></div>
<svg style="position:absolute;left:400px;top:676px" width="5" height="8" viewBox="0 0 5 8"><path d="M0 0 L4.6 3.6 L0 7.2 Z" fill="#2a2a2a"/></svg>
<div class="t" style="left:409.5px;top:672.5px;font-size:12px;color:#5a5a5a;letter-spacing:1px">CALLBACKS</div>
<svg style="position:absolute;left:1064px;top:674px" width="10" height="13" viewBox="0 0 10 13"><path d="M1.8 4.3 C1.9 2.1, 3.3 0.95, 5 0.95 C7 0.95, 8.3 2.2, 8.3 3.9 C8.3 5.5, 7.1 6.1, 6.1 6.7 C5.3 7.2, 5 7.7, 5 8.5 V8.8" fill="none" stroke="#a6a6a6" stroke-width="1.9"/><rect x="4" y="10" width="2" height="2" fill="#a6a6a6"/></svg>
<div style="left:395px;top:698px;width:685px;height:1px;background:#c4c4c4"></div>
<svg style="position:absolute;left:400px;top:704px" width="5" height="8" viewBox="0 0 5 8"><path d="M0 0 L4.6 3.6 L0 7.2 Z" fill="#2a2a2a"/></svg>
<div class="t" style="left:409.5px;top:700.5px;font-size:12px;color:#5a5a5a;letter-spacing:1px">INPUTS*</div>
<svg style="position:absolute;left:1064px;top:702px" width="10" height="13" viewBox="0 0 10 13"><path d="M1.8 4.3 C1.9 2.1, 3.3 0.95, 5 0.95 C7 0.95, 8.3 2.2, 8.3 3.9 C8.3 5.5, 7.1 6.1, 6.1 6.7 C5.3 7.2, 5 7.7, 5 8.5 V8.8" fill="none" stroke="#a6a6a6" stroke-width="1.9"/><rect x="4" y="10" width="2" height="2" fill="#a6a6a6"/></svg>
<div style="left:395px;top:726px;width:685px;height:1px;background:#c4c4c4"></div>
<svg style="position:absolute;left:400px;top:732px" width="5" height="8" viewBox="0 0 5 8"><path d="M0 0 L4.6 3.6 L0 7.2 Z" fill="#2a2a2a"/></svg>
<div class="t" style="left:409.5px;top:728.5px;font-size:12px;color:#5a5a5a;letter-spacing:1px">SIMULATION OUTPUTS</div>
<svg style="position:absolute;left:1064px;top:730px" width="10" height="13" viewBox="0 0 10 13"><path d="M1.8 4.3 C1.9 2.1, 3.3 0.95, 5 0.95 C7 0.95, 8.3 2.2, 8.3 3.9 C8.3 5.5, 7.1 6.1, 6.1 6.7 C5.3 7.2, 5 7.7, 5 8.5 V8.8" fill="none" stroke="#a6a6a6" stroke-width="1.9"/><rect x="4" y="10" width="2" height="2" fill="#a6a6a6"/></svg>
<div style="left:395px;top:754px;width:685px;height:1px;background:#c4c4c4"></div>
<svg style="position:absolute;left:400px;top:760px" width="5" height="8" viewBox="0 0 5 8"><path d="M0 0 L4.6 3.6 L0 7.2 Z" fill="#2a2a2a"/></svg>
<div class="t" style="left:409.5px;top:756.5px;font-size:12px;color:#5a5a5a;letter-spacing:1px">CONFIGURATION SETTINGS OVERRIDES</div>
<svg style="position:absolute;left:1064px;top:758px" width="10" height="13" viewBox="0 0 10 13"><path d="M1.8 4.3 C1.9 2.1, 3.3 0.95, 5 0.95 C7 0.95, 8.3 2.2, 8.3 3.9 C8.3 5.5, 7.1 6.1, 6.1 6.7 C5.3 7.2, 5 7.7, 5 8.5 V8.8" fill="none" stroke="#a6a6a6" stroke-width="1.9"/><rect x="4" y="10" width="2" height="2" fill="#a6a6a6"/></svg>
<div style="left:395px;top:782px;width:685px;height:1px;background:#c4c4c4"></div>
<svg style="position:absolute;left:400px;top:788px" width="5" height="8" viewBox="0 0 5 8"><path d="M0 0 L4.6 3.6 L0 7.2 Z" fill="#2a2a2a"/></svg>
<div class="t" style="left:409.5px;top:784.5px;font-size:12px;color:#5a5a5a;letter-spacing:1px">FAULT SETTINGS</div>
<svg style="position:absolute;left:1064px;top:786px" width="10" height="13" viewBox="0 0 10 13"><path d="M1.8 4.3 C1.9 2.1, 3.3 0.95, 5 0.95 C7 0.95, 8.3 2.2, 8.3 3.9 C8.3 5.5, 7.1 6.1, 6.1 6.7 C5.3 7.2, 5 7.7, 5 8.5 V8.8" fill="none" stroke="#a6a6a6" stroke-width="1.9"/><rect x="4" y="10" width="2" height="2" fill="#a6a6a6"/></svg>
<div style="left:395px;top:810px;width:685px;height:1px;background:#c4c4c4"></div>
<svg style="position:absolute;left:400px;top:816px" width="5" height="8" viewBox="0 0 5 8"><path d="M0 0 L4.6 3.6 L0 7.2 Z" fill="#2a2a2a"/></svg>
<div class="t" style="left:409.5px;top:812.5px;font-size:12px;color:#5a5a5a;letter-spacing:1px">SEQUENCE DIAGRAM ASSESSMENT</div>
<svg style="position:absolute;left:1064px;top:814px" width="10" height="13" viewBox="0 0 10 13"><path d="M1.8 4.3 C1.9 2.1, 3.3 0.95, 5 0.95 C7 0.95, 8.3 2.2, 8.3 3.9 C8.3 5.5, 7.1 6.1, 6.1 6.7 C5.3 7.2, 5 7.7, 5 8.5 V8.8" fill="none" stroke="#a6a6a6" stroke-width="1.9"/><rect x="4" y="10" width="2" height="2" fill="#a6a6a6"/></svg>
<div style="left:395px;top:838px;width:685px;height:1px;background:#c4c4c4"></div>
<svg style="position:absolute;left:400px;top:844px" width="5" height="8" viewBox="0 0 5 8"><path d="M0 0 L4.6 3.6 L0 7.2 Z" fill="#2a2a2a"/></svg>
<div class="t" style="left:409.5px;top:840.5px;font-size:12px;color:#5a5a5a;letter-spacing:1px">ITERATIONS</div>
<svg style="position:absolute;left:1064px;top:842px" width="10" height="13" viewBox="0 0 10 13"><path d="M1.8 4.3 C1.9 2.1, 3.3 0.95, 5 0.95 C7 0.95, 8.3 2.2, 8.3 3.9 C8.3 5.5, 7.1 6.1, 6.1 6.7 C5.3 7.2, 5 7.7, 5 8.5 V8.8" fill="none" stroke="#a6a6a6" stroke-width="1.9"/><rect x="4" y="10" width="2" height="2" fill="#a6a6a6"/></svg>
<div style="left:395px;top:866px;width:685px;height:1px;background:#c4c4c4"></div>
<svg style="position:absolute;left:400px;top:872px" width="5" height="8" viewBox="0 0 5 8"><path d="M0 0 L4.6 3.6 L0 7.2 Z" fill="#2a2a2a"/></svg>
<div class="t" style="left:409.5px;top:868.5px;font-size:12px;color:#5a5a5a;letter-spacing:1px">LOGICAL AND TEMPORAL ASSESSMENTS</div>
<svg style="position:absolute;left:1064px;top:870px" width="10" height="13" viewBox="0 0 10 13"><path d="M1.8 4.3 C1.9 2.1, 3.3 0.95, 5 0.95 C7 0.95, 8.3 2.2, 8.3 3.9 C8.3 5.5, 7.1 6.1, 6.1 6.7 C5.3 7.2, 5 7.7, 5 8.5 V8.8" fill="none" stroke="#a6a6a6" stroke-width="1.9"/><rect x="4" y="10" width="2" height="2" fill="#a6a6a6"/></svg>
<div style="left:395px;top:894px;width:685px;height:1px;background:#c4c4c4"></div>
<svg style="position:absolute;left:400px;top:900px" width="5" height="8" viewBox="0 0 5 8"><path d="M0 0 L4.6 3.6 L0 7.2 Z" fill="#2a2a2a"/></svg>
<div class="t" style="left:409.5px;top:896.5px;font-size:12px;color:#5a5a5a;letter-spacing:1px">CUSTOM CRITERIA</div>
<svg style="position:absolute;left:1064px;top:898px" width="10" height="13" viewBox="0 0 10 13"><path d="M1.8 4.3 C1.9 2.1, 3.3 0.95, 5 0.95 C7 0.95, 8.3 2.2, 8.3 3.9 C8.3 5.5, 7.1 6.1, 6.1 6.7 C5.3 7.2, 5 7.7, 5 8.5 V8.8" fill="none" stroke="#a6a6a6" stroke-width="1.9"/><rect x="4" y="10" width="2" height="2" fill="#a6a6a6"/></svg>
<div style="left:395px;top:922px;width:685px;height:1px;background:#c4c4c4"></div>
<svg style="position:absolute;left:398px;top:930px" width="8" height="5" viewBox="0 0 8 5"><path d="M0 0 L7.5 0 L3.75 4.2 Z" fill="#2e2e2e"/></svg>
<div class="t" style="left:409.5px;top:925.0px;font-size:12px;color:#5a5a5a;letter-spacing:1px">COVERAGE SETTINGS*</div>
<svg style="position:absolute;left:1064px;top:926px" width="10" height="13" viewBox="0 0 10 13"><path d="M1.8 4.3 C1.9 2.1, 3.3 0.95, 5 0.95 C7 0.95, 8.3 2.2, 8.3 3.9 C8.3 5.5, 7.1 6.1, 6.1 6.7 C5.3 7.2, 5 7.7, 5 8.5 V8.8" fill="none" stroke="#a6a6a6" stroke-width="1.9"/><rect x="4" y="10" width="2" height="2" fill="#a6a6a6"/></svg>
<svg style="position:absolute;left:436px;top:969px" width="8" height="5" viewBox="0 0 8 5"><path d="M0 0 L7.5 0 L3.75 4.2 Z" fill="#2e2e2e"/></svg>
<div class="t" style="left:448.5px;top:963.5px;font-size:12px;color:#5a5a5a;letter-spacing:1px">COVERAGE TO COLLECT</div>
<div style="left:449px;top:992px;width:16px;height:16px;background:#fff;border:1px solid #555"></div>
<div class="t" style="left:469px;top:994.5px;font-size:12px;color:#333;">Record coverage for system under test</div>
<div style="left:449px;top:1023px;width:16px;height:16px;background:#fff;border:1px solid #555"></div>
<svg style="position:absolute;left:451px;top:1025px" width="12" height="12" viewBox="0 0 12 12"><path d="M2 6.5 L4.8 9.5 L10 2" fill="none" stroke="#000" stroke-width="1.6"/></svg>
<div class="t" style="left:469px;top:1025.5px;font-size:12px;color:#333;">Record coverage for referenced models</div>
<div style="left:419px;top:1013px;width:281px;height:39px;border:5px solid #e60000"></div>
<div class="t" style="left:449.5px;top:1089.5px;font-size:12px;color:#5a5a5a;letter-spacing:1px">COVERAGE METRICS</div>
<div style="left:449px;top:1118px;width:16px;height:16px;background:#fff;border:1px solid #999"></div>
<svg style="position:absolute;left:451px;top:1120px" width="12" height="12" viewBox="0 0 12 12"><path d="M2 6.5 L4.8 9.5 L10 2" fill="none" stroke="#bbb" stroke-width="1.6"/></svg>
<div class="t" style="left:468.5px;top:1120.5px;font-size:12px;color:#333;">Decision</div>
<div style="left:647px;top:1118px;width:16px;height:16px;background:#fff;border:1px solid #999"></div>
<svg style="position:absolute;left:649px;top:1120px" width="12" height="12" viewBox="0 0 12 12"><path d="M2 6.5 L4.8 9.5 L10 2" fill="none" stroke="#bbb" stroke-width="1.6"/></svg>
<div class="t" style="left:666.5px;top:1120.5px;font-size:12px;color:#333;">Condition</div>
<div style="left:449px;top:1149px;width:16px;height:3px;border:1px solid #999;border-bottom:none;background:#fff"></div>
<div style="left:647px;top:1149px;width:16px;height:3px;border:1px solid #999;border-bottom:none;background:#fff"></div>
<div style="left:376px;top:1151px;width:740px;height:6px;background:#fafafa"></div>
<div style="left:0px;top:0px;width:1117px;height:1px;background:#a8a8a8"></div>
<div style="left:0px;top:0px;width:1px;height:1158px;background:#a2a2a2"></div>
<div style="left:1116px;top:0px;width:1px;height:1158px;background:#a2a2a2"></div>
<div style="left:0px;top:1157px;width:1117px;height:1px;background:#9a9a9a"></div>
</body></html>
